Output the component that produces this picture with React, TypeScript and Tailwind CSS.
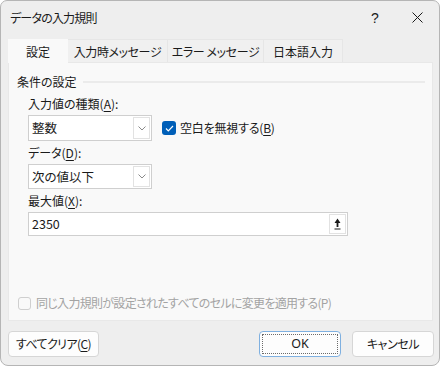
import React from "react";

const font = "[font-family:'Noto_Sans_CJK_JP','Noto_Sans',sans-serif] [font-feature-settings:'palt']";

function Chevron() {
  return (
    <svg width="8" height="5" viewBox="0 0 8 5" fill="none">
      <path d="M0.5 0.5 L4 4 L7.5 0.5" stroke="#8a8a8a" strokeWidth="1" />
    </svg>
  );
}

function Combo({ value }: { value: string }) {
  return (
    <div className="flex h-full w-[124px] items-center border border-[#cfcfcf] bg-white">
      <span className="flex-1 pl-[3px] text-[12.5px] leading-[16px] text-[#1a1a1a]">{value}</span>
      <div className="mr-[1px] flex h-[calc(100%-2px)] w-[17px] items-center justify-center border border-[#e2e2e2] bg-white">
        <Chevron />
      </div>
    </div>
  );
}

function U({ children }: { children: React.ReactNode }) {
  return <span className="underline underline-offset-2">{children}</span>;
}

export default function App() {
  return (
    <div className={`h-[367px] w-[441px] overflow-hidden bg-white ${font} text-[#1a1a1a]`}>
      <div className="flex h-[366px] w-[440px] flex-col rounded-b-[8px] rounded-t-[7px] border border-[#b5b5b5] bg-[#eeeeee]">
        {/* Title bar */}
        <div className="flex h-[33px] shrink-0 items-center">
          <span className="ml-[9px] flex-1 text-[12px] leading-[16px] tracking-[-0.8px]">データの入力規則</span>
          <span className="w-[20px] text-center text-[14px] leading-[16px] [font-family:'Liberation_Sans',sans-serif]">?</span>
          <div className="ml-[24px] mr-[14px] flex h-[16px] w-[16px] items-center justify-center">
            <svg width="11" height="11" viewBox="0 0 11 11">
              <path d="M0.5 0.5 L10.5 10.5 M10.5 0.5 L0.5 10.5" stroke="#1a1a1a" strokeWidth="1" />
            </svg>
          </div>
        </div>
        {/* Tabs */}
        <div className="ml-[7px] mt-[5px] flex h-[23px] shrink-0 items-stretch text-[12px] leading-[16px]">
          <div className="relative z-10 flex h-[24px] w-[60px] items-center justify-center bg-[#f9f9f9] pt-[2px]">設定</div>
          <div className="flex w-[100px] items-center justify-center border-r border-t border-[#e6e6e6] bg-[#f0f0f0] pt-[2px] tracking-[-0.4px]">入力時メッセージ</div>
          <div className="flex w-[96px] items-center justify-center border-r border-t border-[#e6e6e6] bg-[#f0f0f0] pt-[2px] tracking-[-0.4px]">エラー メッセージ</div>
          <div className="flex w-[79px] items-center justify-center border-r border-t border-[#e6e6e6] bg-[#f0f0f0] pt-[2px]">日本語入力</div>
        </div>
        {/* Panel */}
        <div className="ml-[7px] flex h-[259px] w-[425px] shrink-0 flex-col border border-[#e8e8e8] bg-[#f9f9f9] text-[12px] leading-[16px]">
          <div className="mt-[11px] flex h-[16px] items-center pl-[8px] pr-[7px]">
            <span>条件の設定</span>
            <div className="ml-[6px] h-[2px] flex-1 bg-[#ebebeb]" />
          </div>
          <div className="pl-[19px]">
            <div className="mt-[6px] h-[16px]">
              入力値の種類(<U>A</U>):
            </div>
            <div className="mt-[3px] flex h-[26px] items-center">
              <Combo value="整数" />
              <div className="ml-[10px] flex items-center">
                <div className="flex h-[14px] w-[14px] items-center justify-center rounded-[3px] bg-[#005fb8]">
                  <svg width="9" height="7" viewBox="0 0 9 7" fill="none">
                    <path d="M1 3.5 L3.3 5.8 L8 1" stroke="white" strokeWidth="1.2" />
                  </svg>
                </div>
                <span className="ml-[4px] text-[12px] tracking-[-0.2px]">
                  空白を無視する(<U>B</U>)
                </span>
              </div>
            </div>
            <div className="mt-[4px] h-[16px]">
              データ(<U>D</U>):
            </div>
            <div className="mt-[3px] flex h-[25px]">
              <Combo value="次の値以下" />
            </div>
            <div className="mt-[4px] h-[16px]">
              最大値(<U>X</U>):
            </div>
            <div className="mt-[3px] flex h-[24px] w-[320px] items-center border border-[#cfcfcf] bg-white">
              <span className="flex-1 pl-[3px] text-[12.5px]">2350</span>
              <div className="mr-[1px] flex h-[20px] w-[17px] items-center justify-center border border-[#e2e2e2]">
                <svg width="7" height="12" viewBox="0 0 7 12">
                  <path d="M3.5 0.5 L6.5 5 L4.4 5 L4.4 9 L2.6 9 L2.6 5 L0.5 5 Z" fill="#1a1a1a" />
                  <rect x="0.5" y="10.5" width="6" height="1" fill="#1a1a1a" />
                </svg>
              </div>
            </div>
          </div>
          <div className="mb-[9px] ml-[9px] mt-auto flex h-[16px] items-center text-[#a3a3a3]">
            <div className="h-[13px] w-[13px] rounded-[3px] border border-[#cfcfcf] bg-[#f9f9f9]" />
            <span className="ml-[5px] text-[12px] tracking-[-0.7px]">同じ入力規則が設定されたすべてのセルに変更を適用する(P)</span>
          </div>
        </div>
        {/* Buttons */}
        <div className="mt-[10px] flex h-[26px] shrink-0 text-[12px]">
          <div className="ml-[7px] flex w-[91px] items-center justify-center rounded-[4px] border border-[#d6d6d6] bg-[#fdfdfd] tracking-[-0.6px]">
            すべてクリア(<U>C</U>)
          </div>
          <div className="ml-[160px] flex w-[82px] items-center justify-center rounded-[4px] border border-[#7fb0e0] bg-[#fdfdfd] p-[2px]">
            <div className="flex h-full w-full items-center justify-center border border-dotted border-[#6b6b6b] [font-family:'Noto_Sans',sans-serif] text-[12.5px]">
              OK
            </div>
          </div>
          <div className="ml-[11px] flex w-[82px] items-center justify-center rounded-[4px] border border-[#d6d6d6] bg-[#fdfdfd] tracking-[-0.4px]">
            キャンセル
          </div>
        </div>
      </div>
    </div>
  );
}
